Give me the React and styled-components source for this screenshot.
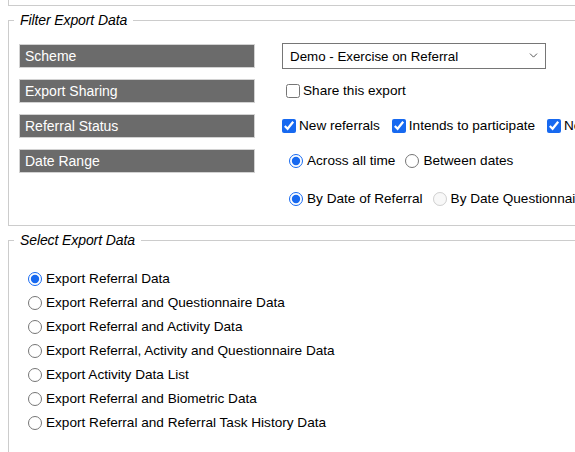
import React, { useState } from 'react';
import styled, { createGlobalStyle } from 'styled-components';
import { ChevronDown } from 'lucide-react';

const GlobalStyle = createGlobalStyle`
  html, body {
    margin: 0;
    padding: 0;
    background: #fff;
    overflow: hidden;
  }
  body {
    font-family: "Liberation Sans", Arial, Helvetica, sans-serif;
    font-size: 13.6px;
    color: #000;
  }
`;

const exportOptions = [
    'Export Referral Data',
    'Export Referral and Questionnaire Data',
    'Export Referral and Activity Data',
    'Export Referral, Activity and Questionnaire Data',
    'Export Activity Data List',
    'Export Referral and Biometric Data',
    'Export Referral and Referral Task History Data'
];

const statuses = [
    { id: 'new', label: 'New referrals' },
    { id: 'intends', label: 'Intends to participate' },
    { id: 'not', label: 'Not interested' }
];

const App = () => {
    const [share, setShare] = useState(false);
    const [checked, setChecked] = useState({ new: true, intends: true, not: true });
    const [range, setRange] = useState('all');
    const [dateBy, setDateBy] = useState('referral');
    const [exportType, setExportType] = useState(0);

    return (
        <>
            <GlobalStyle />
            <Page>
                <PanelTail />

                <Panel $gap={6} $top={16} $bottom={14}>
                    <Legend>Filter Export Data</Legend>
                    <FilterGrid>
                        <FieldLabel>Scheme</FieldLabel>
                        <FieldCell>
                            <SelectWrap>
                                <Select defaultValue="demo">
                                    <option value="demo">Demo - Exercise on Referral</option>
                                </Select>
                                <SelectArrow>
                                    <ChevronDown size={13} strokeWidth={1.5} />
                                </SelectArrow>
                            </SelectWrap>
                        </FieldCell>

                        <FieldLabel>Export Sharing</FieldLabel>
                        <FieldCell $indent={4}>
                            <Choice $gap={3}>
                                <Box type="checkbox" checked={share} onChange={() => setShare(!share)} />
                                Share this export
                            </Choice>
                        </FieldCell>

                        <FieldLabel>Referral Status</FieldLabel>
                        <FieldCell $space={12}>
                            {statuses.map((s) => (
                                <Choice key={s.id} $gap={3}>
                                    <Box
                                        type="checkbox"
                                        checked={checked[s.id]}
                                        onChange={() => setChecked({ ...checked, [s.id]: !checked[s.id] })}
                                    />
                                    {s.label}
                                </Choice>
                            ))}
                        </FieldCell>

                        <FieldLabel>Date Range</FieldLabel>
                        <DateCell>
                            <DateLine>
                                <Choice $gap={4}>
                                    <Box type="radio" name="range" checked={range === 'all'} onChange={() => setRange('all')} />
                                    Across all time
                                </Choice>
                                <Choice $gap={4}>
                                    <Box type="radio" name="range" checked={range === 'between'} onChange={() => setRange('between')} />
                                    Between dates
                                </Choice>
                            </DateLine>
                            <DateLine>
                                <Choice $gap={4}>
                                    <Box type="radio" name="by" checked={dateBy === 'referral'} onChange={() => setDateBy('referral')} />
                                    By Date of Referral
                                </Choice>
                                <Choice $gap={4}>
                                    <Box type="radio" name="by" disabled />
                                    By Date Questionnaire Completed
                                </Choice>
                            </DateLine>
                        </DateCell>
                    </FilterGrid>
                </Panel>

                <Panel $gap={6} $top={19} $bottom={40}>
                    <Legend>Select Export Data</Legend>
                    <OptionList>
                        {exportOptions.map((opt, i) => (
                            <OptionRow key={opt}>
                                <Choice $gap={4}>
                                    <Box
                                        type="radio"
                                        name="exportType"
                                        checked={exportType === i}
                                        onChange={() => setExportType(i)}
                                    />
                                    {opt}
                                </Choice>
                            </OptionRow>
                        ))}
                    </OptionList>
                </Panel>
            </Page>
        </>
    );
};

const Page = styled.div`
    width: 900px;
    padding-left: 8px;
`;

const PanelTail = styled.div`
    height: 5px;
    border: 1px solid #cccccc;
    border-top: none;
`;

const Panel = styled.fieldset`
    margin: ${(p) => p.$gap}px 0 0 0;
    padding: ${(p) => p.$top}px 10px ${(p) => p.$bottom}px 10px;
    border: 1px solid #cccccc;
    min-width: 0;
`;

const Legend = styled.legend`
    padding: 0 6px;
    margin-left: -5px;
    font-style: italic;
    font-size: 14px;
    line-height: 16px;
    letter-spacing: -0.1px;
`;

const FilterGrid = styled.div`
    display: grid;
    grid-template-columns: 236px 1fr;
    grid-template-rows: 24px 24px 24px auto;
    column-gap: 27px;
    row-gap: 11px;
`;

const FieldLabel = styled.div`
    align-self: start;
    box-sizing: border-box;
    height: 24px;
    line-height: 22px;
    padding-left: 5px;
    background: #6b6b6b;
    border: 1px solid #d2d2d2;
    color: #fff;
    font-size: 14px;
    white-space: nowrap;
`;

const FieldCell = styled.div`
    display: flex;
    align-items: center;
    gap: ${(p) => p.$space || 0}px;
    padding-left: ${(p) => p.$indent || 0}px;
    height: 24px;
    white-space: nowrap;
`;

const DateCell = styled.div`
    display: flex;
    flex-direction: column;
    gap: 14px;
    padding-left: 7px;
`;

const DateLine = styled.div`
    display: flex;
    align-items: center;
    gap: 10px;
    height: 24px;
    white-space: nowrap;
`;

const SelectWrap = styled.div`
    position: relative;
    width: 264px;
    height: 26px;
`;

const Select = styled.select`
    appearance: none;
    box-sizing: border-box;
    width: 100%;
    height: 100%;
    margin: 0;
    padding: 0 24px 0 7px;
    border: 1px solid #767676;
    border-radius: 0;
    background: #fff;
    color: #000;
    font-family: "Liberation Sans", Arial, sans-serif;
    font-size: 13.33px;
    outline: none;
`;

const SelectArrow = styled.span`
    position: absolute;
    right: 6px;
    top: 6px;
    display: flex;
    color: #333;
    pointer-events: none;
`;

const Choice = styled.label`
    display: inline-flex;
    align-items: center;
    gap: ${(p) => p.$gap}px;
    font-size: 13.6px;
    line-height: 16px;
`;

const Box = styled.input`
    margin: 0;
    width: 14px;
    height: 14px;
    accent-color: #1769f0;
`;

const OptionList = styled.div`
    display: flex;
    flex-direction: column;
    padding-left: 9px;
`;

const OptionRow = styled.div`
    display: flex;
    align-items: center;
    height: 24px;
`;

export default App;
